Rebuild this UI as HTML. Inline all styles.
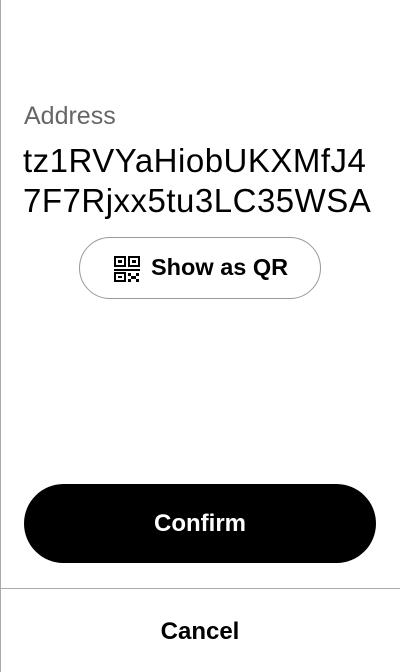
<!DOCTYPE html>
<html><head><meta charset="utf-8"><style>
html,body{margin:0;padding:0;width:400px;height:672px;background:#fff;overflow:hidden;font-family:"Liberation Sans",sans-serif;}
.lb{position:absolute;left:0;top:0;width:1px;height:672px;background:#aaa;}
.lbl{position:absolute;left:24px;top:102px;font-size:25px;color:#666;line-height:28px;}
.addr{position:absolute;left:23px;top:141px;font-size:33px;letter-spacing:0.5px;line-height:40px;color:#000;white-space:nowrap;}
.qr{position:absolute;left:79px;top:237px;width:240px;height:60px;border:1px solid #999;border-radius:31px;box-sizing:content-box;}
.qr span{position:absolute;left:71px;top:16px;font-size:23.5px;font-weight:bold;color:#000;}
.qr svg{position:absolute;left:34px;top:18px;}
.conf{position:absolute;left:24px;top:484px;width:352px;height:79px;background:#000;border-radius:40px;color:#fff;font-size:24px;font-weight:bold;text-align:center;line-height:79px;}
.hl{position:absolute;left:0;top:588px;width:400px;height:1px;background:#aaa;}
.cancel{position:absolute;left:0;top:618px;width:400px;text-align:center;font-size:24px;font-weight:bold;color:#000;}
</style></head><body>
<div class="lb"></div>
<div class="lbl">Address</div>
<div class="addr">tz1RVYaHiobUKXMfJ4<br>7F7Rjxx5tu3LC35WSA</div>
<div class="qr">
<svg width="26" height="26" viewBox="0 0 26 26">
<rect x="1" y="1" width="10" height="9" fill="none" stroke="#000" stroke-width="2"/>
<rect x="4" y="4" width="4" height="3" fill="#000"/>
<rect x="15" y="1" width="10" height="9" fill="none" stroke="#000" stroke-width="2"/>
<rect x="18" y="4" width="4" height="3" fill="#000"/>
<rect x="0" y="13" width="26" height="2" fill="#000"/>
<rect x="1" y="17" width="10" height="8" fill="none" stroke="#000" stroke-width="2"/>
<rect x="4" y="20" width="4" height="2" fill="#000"/>
<rect x="14" y="17" width="3" height="3" fill="#000"/>
<rect x="22" y="17" width="3" height="3" fill="#000"/>
<rect x="17" y="20" width="5" height="3" fill="#000"/>
<rect x="14" y="23" width="3" height="3" fill="#000"/>
<rect x="22" y="23" width="3" height="3" fill="#000"/>
</svg>
<span>Show as QR</span></div>
<div class="conf">Confirm</div>
<div class="hl"></div>
<div class="cancel">Cancel</div>
</body></html>
